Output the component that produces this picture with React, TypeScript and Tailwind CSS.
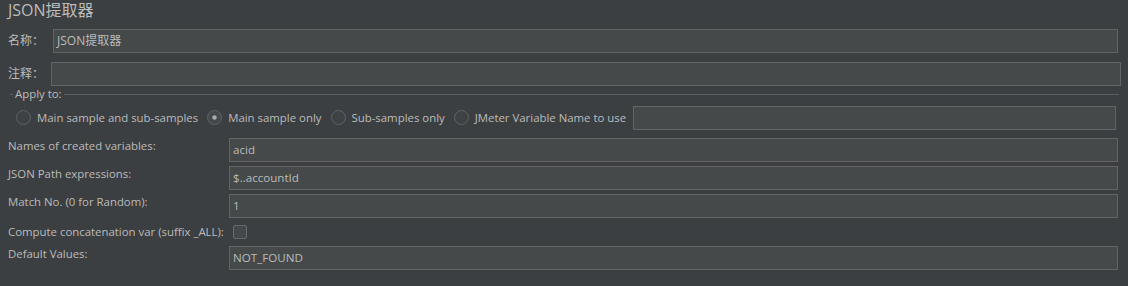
import React from "react";

const font = "font-['Open_Sans','Noto_Sans_CJK_SC',sans-serif]";

const Radio = ({ checked, label }: { checked?: boolean; label: string }) => (
  <div className="flex items-center gap-[6px] mr-[9px]">
    <svg width="15" height="15" viewBox="0 0 15 15">
      <circle cx="7.5" cy="7.5" r="7" fill={checked ? "#43494a" : "#3e4244"} stroke="#5f6365" strokeWidth="1" />
      {checked && <circle cx="7.5" cy="7.5" r="2.2" fill="#a9acae" />}
    </svg>
    <span className="whitespace-nowrap">{label}</span>
  </div>
);

const Field = ({ value, className = "" }: { value?: string; className?: string }) => (
  <div
    className={`h-[24px] bg-[#45494a] border border-[#646464] pl-[3px] flex items-center whitespace-nowrap text-[#bbbbbb] text-[11.6px] ${className}`}
  >
    {value}
  </div>
);

const Row = ({ label, value, className = "" }: { label: string; value: string; className?: string }) => (
  <div className={`flex items-start ${className}`}>
    <div className="w-[221px] shrink-0 leading-[16px]">{label}</div>
    <Field value={value} className="flex-1" />
  </div>
);

export default function App() {
  return (
    <div className={`w-[1128px] h-[286px] bg-[#3c3f41] text-[#bbbbbb] text-[11.4px] ${font} overflow-hidden`}>
      {/* title */}
      <div className="h-[29px] pl-[8px] text-[16px] leading-[20px]">JSON提取器</div>

      {/* name */}
      <div className="flex items-center h-[24px] pl-[8px] pr-[10px] text-[12px]">
        <div className="w-[45px] shrink-0">名称：</div>
        <Field value="JSON提取器" className="flex-1 !text-[12px]" />
      </div>

      {/* comment */}
      <div className="flex items-center h-[24px] mt-[9px] pl-[8px] pr-[7px] text-[12px]">
        <div className="w-[43px] shrink-0">注释：</div>
        <Field className="flex-1" />
      </div>

      {/* apply to group */}
      <div className="mt-[2px] pl-[10px] pr-[9px]">
        <div className="flex items-center h-[12px]">
          <div className="w-[3px] h-px bg-[#5c5f61]" />
          <span className="px-[2px] leading-[12px]">Apply to:</span>
          <div className="flex-1 h-px bg-[#5c5f61]" />
        </div>
        <div className="flex items-center h-[24px] mt-[6px] pl-[6px] pr-[3px]">
          <Radio label="Main sample and sub-samples" />
          <Radio checked label="Main sample only" />
          <Radio label="Sub-samples only" />
          <Radio label="JMeter Variable Name to use" />
          <Field className="flex-1 ml-[-2px]" />
        </div>
      </div>

      {/* extractor settings */}
      <div className="mt-[8px] pl-[8px] pr-[10px] flex flex-col">
        <Row label="Names of created variables:" value="acid" />
        <Row label="JSON Path expressions:" value="$..accountId" className="mt-[4px]" />
        <Row label="Match No. (0 for Random):" value="1" className="mt-[4px]" />
        <div className="flex items-center h-[22px] mt-[3px]">
          <div className="w-[221px] shrink-0 whitespace-nowrap">Compute concatenation var (suffix _ALL):</div>
          <div className="w-[14px] h-[14px] ml-[4px] rounded-[2px] border border-[#6b6b6b] bg-[#43494a]" />
        </div>
        <Row label="Default Values:" value="NOT_FOUND" className="mt-[3px]" />
      </div>
    </div>
  );
}
